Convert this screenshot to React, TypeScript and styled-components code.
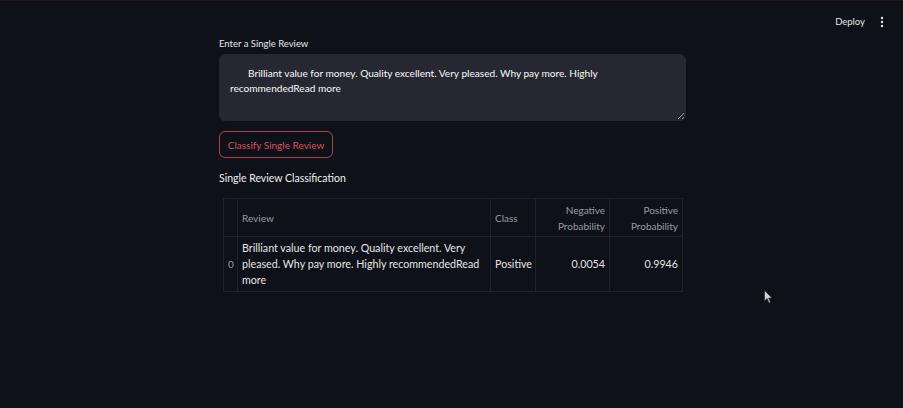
import React from "react";
import styled, { createGlobalStyle } from "styled-components";

const Global = createGlobalStyle`
  html, body { margin: 0; padding: 0; background: #0e1117; }
  body { font-family: Lato, "Noto Sans", sans-serif; color: #fafafa; }
  * { box-sizing: border-box; }
`;

const Page = styled.div`
  position: relative;
  width: 903px;
  height: 408px;
  background: #0e1117;
  overflow: hidden;
  border-top: 1px solid #2a1417;
`;

const Header = styled.header`
  height: 37px;
  display: flex;
  justify-content: flex-end;
  align-items: flex-start;
  gap: 15px;
  padding: 15px 19px 0 0;
`;

const DeployBtn = styled.span`
  font-size: 9.5px;
  line-height: 12px;
  color: #e6e6ea;
`;

const Kebab = styled.svg`
  width: 4px;
  height: 12px;
`;

const Main = styled.main`
  width: 467px;
  margin: 0 0 0 219px;
  display: flex;
  flex-direction: column;
`;

const Label = styled.label`
  font-size: 9.5px;
  color: #e6e6ea;
  height: 12px;
  line-height: 12px;
  margin-bottom: 4px;
`;

const Area = styled.textarea`
  width: 467px;
  height: 67px;
  background: #262730;
  border: 1px solid #262730;
  border-radius: 6px;
  color: #fafafa;
  font-family: Lato, "Noto Sans", sans-serif;
  font-size: 10.1px;
  line-height: 15px;
  padding: 11px 10px;
  resize: vertical;
  outline: none;
`;

const Button = styled.button`
  margin-top: 10px;
  align-self: flex-start;
  height: 27px;
  width: 114px;
  background: transparent;
  border: 1px solid #b0404a;
  border-radius: 6px;
  color: #d9505b;
  font-family: Lato, "Noto Sans", sans-serif;
  font-size: 10px;
  padding: 0;
`;

const SubTitle = styled.div`
  margin-top: 13px;
  font-size: 10.5px;
  color: #f0f0f2;
  height: 14px;
  line-height: 14px;
`;

const Table = styled.table`
  margin: 13px 0 0 4px;
  width: 459px;
  border-collapse: collapse;
  table-layout: fixed;
  border: 1px solid #1f222a;
`;

const Th = styled.th<{ $align?: string }>`
  font-weight: normal;
  font-size: 10px;
  color: #9a9ca5;
  text-align: ${(p) => p.$align || "left"};
  padding: 0 4px;
  height: 38px;
  line-height: 16px;
  border: 1px solid #1f222a;
`;

const Td = styled.td<{ $align?: string; $dim?: boolean }>`
  font-size: ${(p) => (p.$dim ? "10px" : "10.7px")};
  color: ${(p) => (p.$dim ? "#9a9ca5" : "#e4e4e8")};
  text-align: ${(p) => p.$align || "left"};
  padding: 0 4px;
  height: 55px;
  line-height: 16px;
  border: 1px solid #1f222a;
`;

const Cursor = styled.svg`
  position: absolute;
  left: 764px;
  top: 289px;
  width: 9px;
  height: 14px;
`;

export default function App() {
  return (
    <>
      <Global />
      <Page>
        <Header>
          <DeployBtn>Deploy</DeployBtn>
          <Kebab viewBox="0 0 4 12">
            <circle cx="2" cy="2" r="1.2" fill="#e6e6ea" />
            <circle cx="2" cy="6" r="1.2" fill="#e6e6ea" />
            <circle cx="2" cy="10" r="1.2" fill="#e6e6ea" />
          </Kebab>
        </Header>
        <Main>
          <Label>Enter a Single Review</Label>
          <Area
            readOnly
            defaultValue={
              "       Brilliant value for money. Quality excellent. Very pleased. Why pay more. Highly recommendedRead more"
            }
          />
          <Button>Classify Single Review</Button>
          <SubTitle>Single Review Classification</SubTitle>
          <Table>
            <colgroup>
              <col style={{ width: 14 }} />
              <col style={{ width: 253 }} />
              <col style={{ width: 45 }} />
              <col style={{ width: 74 }} />
              <col style={{ width: 73 }} />
            </colgroup>
            <thead>
              <tr>
                <Th></Th>
                <Th>Review</Th>
                <Th>Class</Th>
                <Th $align="right">Negative Probability</Th>
                <Th $align="right">Positive Probability</Th>
              </tr>
            </thead>
            <tbody>
              <tr>
                <Td $dim $align="center">0</Td>
                <Td>Brilliant value for money. Quality excellent. Very pleased. Why pay more. Highly recommendedRead more</Td>
                <Td>Positive</Td>
                <Td $align="right">0.0054</Td>
                <Td $align="right">0.9946</Td>
              </tr>
            </tbody>
          </Table>
        </Main>
        <Cursor viewBox="0 0 9 14">
          <path d="M0.5 0.5 L0.5 11 L3 8.5 L5 13 L6.5 12.3 L4.6 8 L8 8 Z" fill="#cfd0d4" stroke="#222" strokeWidth="0.6" />
        </Cursor>
      </Page>
    </>
  );
}
